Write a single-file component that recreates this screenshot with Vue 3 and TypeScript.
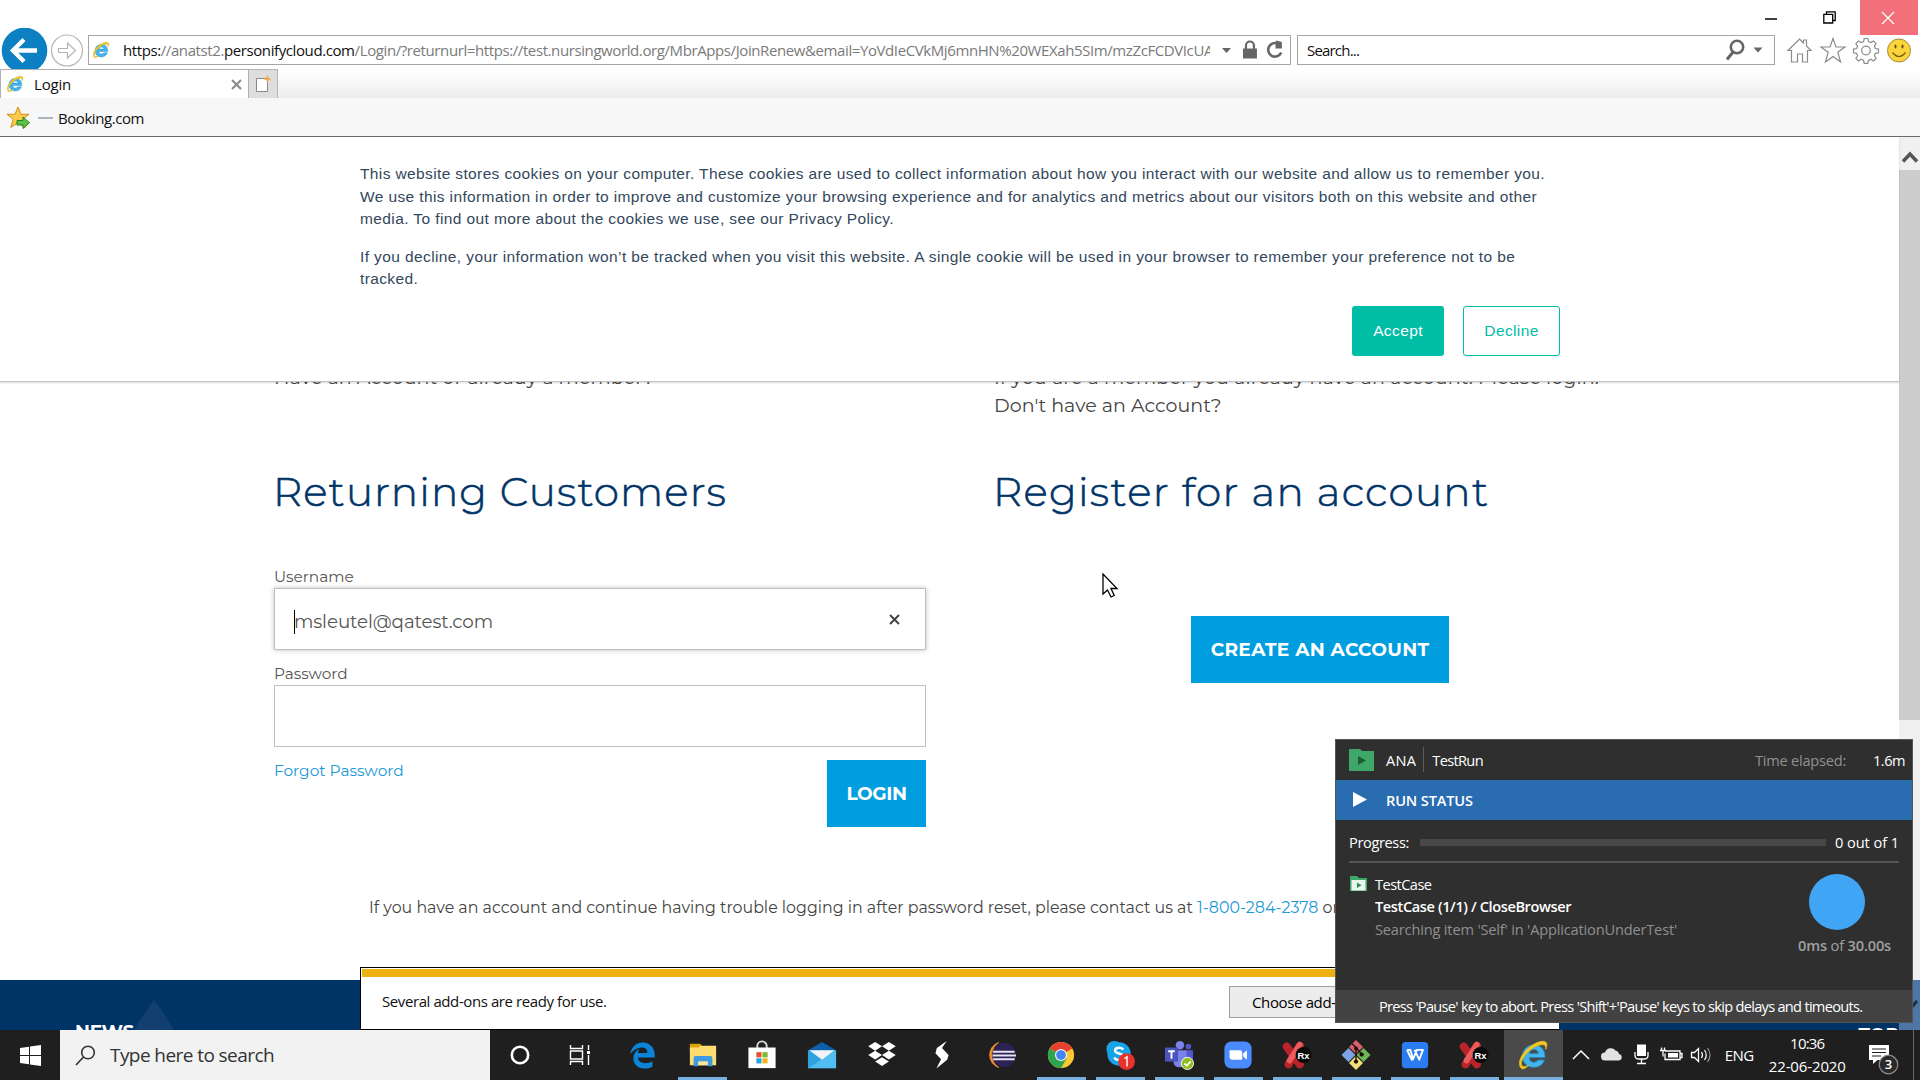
<script setup lang="ts">
interface TaskItem {
  id: string
  running?: boolean
  active?: boolean
}

const launchers: TaskItem[] = [
  { id: 'edge' },
  { id: 'explorer', running: true },
  { id: 'store' },
  { id: 'mail' },
  { id: 'dropbox' },
  { id: 'bolt' },
  { id: 'eclipse' },
]
const apps: TaskItem[] = [
  { id: 'chrome', running: true },
  { id: 'skype', running: true },
  { id: 'teams', running: true },
  { id: 'zoom', running: true },
  { id: 'ranorex', running: true },
  { id: 'git', running: true },
  { id: 'wps', running: true },
  { id: 'ranorex', running: true },
  { id: 'ie', running: true, active: true },
]
</script>

<template>
  <div class="screen">
    <svg class="defs" width="0" height="0" aria-hidden="true">
      <symbol id="i-ielogo" viewBox="0 0 32 32">
        <path d="M28 18.500H12.200c.2 3 1.900 4.700 4.600 4.700 1.900 0 3.200-.7 4-2.200h6.600c-1.500 4.700-5.300 7.300-10.600 7.300C10 28.300 5.500 24 5.500 17.300 5.500 10.500 10.100 6 16.800 6 23.900 6 28 10.600 28 17.800zM21.400 14.400c-.3-2.500-2-3.900-4.500-3.900s-4.200 1.400-4.600 3.900z" fill="#43b5ea" stroke="#1d86c8" stroke-width=".8" />
        <path d="M4.500 29.500C-.5 25 4 15 12 8.500 19.500 2.300 28 .8 29.500 4c.8 1.600.4 3.800-.8 6.200.3-2.300-.2-3.800-1.900-4.300C22.500 4.600 15 8.500 9.500 14.700c-4.600 5.200-6.500 10.500-4.300 12.300 1.300 1 3.700.6 6.300-.6-2.700 2.600-5.300 4.300-7 3.100z" fill="#f2cb2d" stroke="#d9b01f" stroke-width=".9" />
      </symbol>
      <symbol id="i-edge" viewBox="0 0 512 512">
        <path fill="#0a84d8" d="M25.714 228.163c.111-.162.23-.323.342-.485-.021.162-.045.323-.065.485h-.277zm460.572 15.508c0-44.032-7.754-84.465-28.801-122.405C416.498 47.879 343.912 8.001 258.893 8.001 118.962 7.724 40.617 113.214 26.056 227.679c42.429-61.312 117.073-121.376 220.375-124.966 0 0 109.666 0 99.419 104.957H169.997c6.369-37.386 18.554-58.986 34.339-78.926-75.048 34.893-121.85 96.096-120.742 188.315.83 71.448 50.124 144.836 120.743 171.976 83.357 31.847 192.776 7.2 240.132-21.324V363.307c-80.864 56.494-270.871 60.925-272.255-67.572h314.073v-52.064z" />
      </symbol>
      <symbol id="i-explorer" viewBox="0 0 32 32">
        <path d="M2 4h11l2 2.500v5H2z" fill="#d9a300" />
        <path d="M2 8h9l2.500-2H30v21H2z" fill="#fddc70" />
        <path d="M6 28V19q0-2 2-2h16q2 0 2 2v9h-5v-5H11v5z" fill="#3d9be3" />
        <path d="M11 23h10v4H11z" fill="#fbe7a0" />
      </symbol>
      <symbol id="i-store" viewBox="0 0 32 32">
        <path d="M11 9V6.500a5 5 0 0 1 10 0V9" fill="none" stroke="#d8d8d8" stroke-width="2" />
        <path d="M1.500 8h29v22h-29z" fill="#fff" />
        <path d="M10 13h5.500v5.500H10z" fill="#e8512a" /><path d="M16.500 13H22v5.500h-5.500z" fill="#7cb82f" />
        <path d="M10 19.500h5.500V25H10z" fill="#2aa3e3" /><path d="M16.500 19.500H22V25h-5.500z" fill="#f6b51e" />
      </symbol>
      <symbol id="i-mail" viewBox="0 0 32 32">
        <path d="M1 11 16 2l15 9-15 6z" fill="#0f5fa8" />
        <path d="M1 11h30v19H1z" fill="#2ea3e0" />
        <path d="M1 30l30-19v19z" fill="#52bdf0" />
        <path d="M2.500 11h27L16 21z" fill="#f0f4f8" />
      </symbol>
      <symbol id="i-dropbox" viewBox="0 0 32 32">
        <path fill="#fff" d="M8.700 2l7.300 4.700-7.300 4.700L1.300 6.700zM23.300 2l7.400 4.700-7.400 4.700L16 6.700zM1.300 16.100l7.400-4.700 7.300 4.700-7.300 4.700zM23.300 11.400l7.400 4.700-7.400 4.700-7.300-4.700zM8.700 23l7.300-4.700 7.300 4.700-7.300 4.800z" />
      </symbol>
      <symbol id="i-bolt" viewBox="0 0 32 32">
        <path fill="#fff" d="M21 1 10.500 8.500 9 14l6 6.500-5 10 11.500-9.500 1.500-5-7-7.500z" />
      </symbol>
      <symbol id="i-eclipse" viewBox="0 0 32 32">
        <circle cx="18" cy="16" r="13" fill="#2c2255" />
        <path d="M12.500 2.700A14 14 0 0 0 12.500 29.300 15.500 15.500 0 0 1 12.500 2.700z" fill="#f0912e" stroke="#f0912e" stroke-width="1" />
        <path d="M6.500 11.500h23v2h-23zM6 15.500h25v2.200H6zM6.500 19.500h23v2h-23z" fill="#e4e4f2" />
      </symbol>
      <symbol id="i-chrome" viewBox="0 0 32 32">
        <circle cx="16" cy="16" r="14" fill="#fbc832" />
        <path d="M16 16 3.900 9A14 14 0 0 1 28.100 9z" fill="#e4412f" />
        <path d="M3.900 9A14 14 0 0 0 16 30l6.060-10.500L16 16z" fill="#2da44e" />
        <circle cx="16" cy="16" r="6.500" fill="#f1f1f1" /><circle cx="16" cy="16" r="5.200" fill="#4285f4" />
      </symbol>
      <symbol id="i-skype" viewBox="0 0 32 32">
        <circle cx="10" cy="9.500" r="8.500" fill="#1ca3e6" /><circle cx="15" cy="15" r="12.500" fill="#14a4e8" />
        <path d="M19.500 10.300c-1-1.600-2.400-2.100-4.500-2.100-2.600 0-4.300 1.100-4.300 3 0 4.300 8.800 2.200 8.800 6.700 0 2.200-1.900 3.500-4.500 3.500-2.200 0-4-.8-5-2.800" fill="none" stroke="#fff" stroke-width="2.600" />
        <circle cx="23" cy="23" r="9" fill="#e8322d" />
        <path d="M20.800 19.800l2.700-1.800v10.300" fill="none" stroke="#fff" stroke-width="1.500" />
      </symbol>
      <symbol id="i-teams" viewBox="0 0 32 32">
        <circle cx="17" cy="5.500" r="4.500" fill="#7b83eb" /><circle cx="26" cy="7" r="3" fill="#5059c9" />
        <path d="M22 11h9v9q0 5-5 5h-4z" fill="#5059c9" /><path d="M10 11h14v11q0 7-7 7t-7-7z" fill="#7b83eb" />
        <path d="M1 8h14v15H1z" fill="#4b53bc" /><path d="M4.500 12h7M8 12v8" stroke="#fff" stroke-width="2" />
        <circle cx="25" cy="25" r="6.500" fill="#8fbe1c" stroke="#fff" stroke-width="1" /><path d="M21.800 25l2.500 2.500 4.200-4.700" fill="none" stroke="#fff" stroke-width="1.800" />
      </symbol>
      <symbol id="i-zoom" viewBox="0 0 32 32">
        <rect x="1.500" y="1.500" width="29" height="29" rx="7.500" fill="#4a8cff" />
        <path d="M7 11h11q2.500 0 2.500 2.500V21h-11Q7 21 7 18.500zM21.500 14.500l4-3.500v10l-4-3.500z" fill="#fff" />
      </symbol>
      <symbol id="i-ranorex" viewBox="0 0 32 32">
        <path d="M5 7l14 19M19 6 7 26" stroke="#b9242a" stroke-width="8.500" stroke-linecap="round" />
        <path d="M19 5 8 22" stroke="#ec5c5c" stroke-width="6" stroke-linecap="round" />
        <circle cx="23" cy="16" r="8.500" fill="#0a0a0a" />
        <text x="16.500" y="20" font-family="Liberation Sans, sans-serif" font-weight="700" font-size="10" fill="#fff">Rx</text>
      </symbol>
      <symbol id="i-git" viewBox="0 0 32 32">
        <path d="M16 0l7.500 7.500-7.500 7.500-7.500-7.500z" fill="#d8626a" /><path d="M8 8.500 15.300 16 8 23.500.5 16z" fill="#7ea2e6" />
        <path d="M24 8.500l7.500 7.500-7.500 7.500-7.300-7.500z" fill="#6db558" /><path d="M16 17l7.500 7.500L16 32l-7.500-7.500z" fill="#f4e07a" />
        <path d="M12 4l10 11M16 10v14" stroke="#2b1512" stroke-width="1.600" /><circle cx="16" cy="23" r="2.300" fill="#1c120c" /><circle cx="22" cy="15.500" r="2.300" fill="#1c120c" /><circle cx="16" cy="9" r="2" fill="#1c120c" />
      </symbol>
      <symbol id="i-wps" viewBox="0 0 32 32">
        <rect x="2" y="2" width="28" height="28" rx="4" fill="#2b7cf0" />
        <path d="M7.500 10.500h3.500l3 10 4-10h6.500l-4 10.500-5-10.500M7.500 10.500 12.500 21l2-.5" fill="none" stroke="#fff" stroke-width="2" stroke-linejoin="round" />
      </symbol>
      <symbol id="i-ie" viewBox="0 0 32 32"><use href="#i-ielogo" /></symbol>
    </svg>

    <header class="chrome">
      <div class="titlebar">
        <span class="winbtn"><svg width="12" height="12"><path d="M0 7h12" stroke="#000" stroke-width="1.500" /></svg></span>
        <span class="winbtn"><svg width="13" height="13"><path d="M3.500 3V.8h8.700v8.700H10M.8 3.300h8.900V12H.8z" fill="none" stroke="#000" stroke-width="1.300" /></svg></span>
        <span class="winbtn close"><svg width="14" height="14"><path d="M1 1l12 12M13 1 1 13" stroke="#fff" stroke-width="1.300" /></svg></span>
      </div>
      <div class="navrow">
        <svg class="navs" width="88" height="42" viewBox="0 0 88 42">
          <circle cx="24.500" cy="22.500" r="22.800" fill="#0c80c3" />
          <path d="M13 22.500h24M24 11.500 13 22.500l11 11" fill="none" stroke="#fff" stroke-width="4.400" />
          <circle cx="67" cy="22.500" r="15.500" fill="#fff" stroke="#b5b5b5" stroke-width="1.200" />
          <path d="M58.500 20.500h9v-5.500l8 7.500-8 7.500v-5.500h-9z" fill="none" stroke="#b5b5b5" stroke-width="1.200" />
        </svg>
        <div class="address">
          <svg class="fav" width="18" height="18"><use href="#i-ielogo" /></svg>
          <div class="urlclip"><span class="t url"><b>https:</b>//anatst2.<b>personifycloud.com</b>/Login/?returnurl=https://test.nursingworld.org/MbrApps/JoinRenew&amp;email=YoVdIeCVkMj6mnHN%20WEXah5SIm/mzZcFCDVIcUA</span></div>
          <svg class="tools" width="68" height="28" viewBox="0 0 68 28">
            <path d="M0 12h9l-4.500 5z" fill="#666" />
            <path d="M21 12.500h14v10H21z" fill="#666" /><path d="M24 13V9.500a4 4 0 0 1 8 0V13" fill="none" stroke="#666" stroke-width="2.200" />
            <path d="M58.300 9.500A6.800 6.800 0 1 0 59.300 16.500" fill="none" stroke="#666" stroke-width="2.600" /><path d="M54 4.500 60 6v6.500h-6.500z" fill="#666" />
          </svg>
        </div>
        <div class="search">
          <span class="t ph">Search...</span>
          <svg width="38" height="22" viewBox="0 0 38 22"><circle cx="11" cy="8" r="6.200" fill="none" stroke="#666" stroke-width="2.600" /><path d="M7.500 12.500 1 20.500" stroke="#666" stroke-width="3" /><path d="M27.500 8.500h9l-4.500 5z" fill="#666" /></svg>
        </div>
        <svg class="cmd" width="134" height="30" viewBox="0 0 134 30">
          <g fill="#fff" stroke="#8b8b8b" stroke-width="1.200">
            <path d="M3 15.500 14.500 4l4 4V5h3v6l4.500 4.500h-3.500V27h-5v-8h-5v8H6.500V15.500z" />
            <path d="M48 3.500l3 8.500h9l-7.200 5.300L55.600 27 48 21.400 40.400 27l2.800-9.700L36 12h9z" />
            <path d="M79.200 3.500h3.600l.6 3 2.500 1.100 2.600-1.700 2.600 2.600-1.700 2.600 1 2.400 3.100.6v3.700l-3.100.6-1 2.400 1.700 2.600-2.600 2.600-2.600-1.700-2.500 1.100-.6 3h-3.600l-.6-3-2.500-1.100-2.600 1.700-2.600-2.600 1.700-2.600-1-2.400-3.100-.6v-3.700l3.100-.6 1-2.400-1.700-2.600 2.600-2.600 2.600 1.700 2.500-1.100z" /><circle cx="81" cy="15.500" r="4.300" />
          </g>
          <circle cx="114" cy="15.500" r="11.500" fill="#fbd33b" stroke="#a08c3c" stroke-width="1" />
          <path d="M107.500 17.500q6.500 8 13 0" fill="none" stroke="#6d5a14" stroke-width="1.200" /><ellipse cx="110.500" cy="11.500" rx="1" ry="2" fill="#5f4e10" /><ellipse cx="117.500" cy="11.500" rx="1" ry="2" fill="#5f4e10" />
        </svg>
      </div>
      <div class="tabs">
        <div class="tab">
          <svg width="18" height="18"><use href="#i-ielogo" /></svg>
          <span class="t title">Login</span>
          <svg class="tabx" width="11" height="11"><path d="M1 1l9 9M10 1 1 10" stroke="#8a8a8a" stroke-width="2" /></svg>
        </div>
        <div class="newtab"><svg width="18" height="18" viewBox="0 0 18 18"><path d="M2.500 3.500h11v13h-11z" fill="#fff" stroke="#888" stroke-width="1" /><path d="M13.500 0l1.200 2.800L17.500 4l-2.800 1.200L13.500 8l-1.200-2.800L9.500 4l2.800-1.200z" fill="#f4a948" /></svg></div>
      </div>
      <div class="favbar">
        <svg width="26" height="26" viewBox="0 0 26 26"><path d="M12 2l3 7.300h8l-6.200 5 2.400 8.200L12 17.700 4.800 22.500l2.400-8.200L1 9.300h8z" fill="#fcc94a" stroke="#d28f1c" stroke-width="1" /><path d="M11 15.500h6V12l6.500 5.700L17 23.500V20h-6z" fill="#5cc341" stroke="#2c8420" stroke-width="1" /></svg>
        <i class="dash"></i>
        <span class="t bm">Booking.com</span>
      </div>
    </header>

    <main class="viewport">
      <div class="page">
        <div class="cols">
          <section>
            <p class="intro"><span class="t have">Have an Account or already a member?</span></p>
            <h2 class="returning">Returning Customers</h2>
            <div class="label first">Username</div>
            <div class="input focus"><i class="caret"></i><span class="t value">msleutel@qatest.com</span><svg width="11" height="11"><path d="M1 1l9 9M10 1 1 10" stroke="#444" stroke-width="2" /></svg></div>
            <div class="label">Password</div>
            <div class="input"></div>
            <div class="actions"><a>Forgot Password</a><button class="btn login">LOGIN</button></div>
          </section>
          <section>
            <p class="intro"><span class="t long">If you are a member you already have an account. Please login.</span><br /><span class="t none">Don't have an Account?</span></p>
            <h2 class="register">Register for an account</h2>
            <button class="btn create">CREATE AN ACCOUNT</button>
          </section>
        </div>
        <p class="help">If you have an account and continue having trouble logging in after password reset, please contact us at <a>1-800-284-2378</a> or</p>
        <footer class="foot"><b class="news">NEWS</b><svg width="40" height="30"><path d="M20 0q12 16 20 30H0Q8 16 20 0z" fill="#133f70" /></svg><b class="top">TOP</b></footer>
      </div>
      <aside class="scroll">
        <div class="up"><svg width="18" height="14"><path d="M2 11.500 9 4l7 7.500" fill="none" stroke="#555" stroke-width="3.500" /></svg></div>
        <div class="thumb"></div>
        <div class="rest"></div>
        <div class="down"><svg width="21" height="14"><path d="M4 3l7 8 7-8" fill="none" stroke="#1c2b40" stroke-width="3" /></svg></div>
      </aside>
    </main>

    <nav class="taskbar">
      <div class="start"><svg width="21" height="21" viewBox="0 0 21 21"><path d="M0 3l9-1.300V10H0zM10 1.500 21 0v10H10zM0 11h9v8.200L0 18zM10 11h11v10l-11-1.500z" fill="#fff" /></svg></div>
      <div class="tsearch"><svg width="21" height="21" viewBox="0 0 21 21"><circle cx="13" cy="7.500" r="6.300" fill="none" stroke="#333" stroke-width="1.600" /><path d="M8.500 12 1 20" stroke="#333" stroke-width="1.700" /></svg><span class="t">Type here to search</span></div>
      <div class="slot"><svg width="20" height="20"><circle cx="10" cy="10" r="8.200" fill="none" stroke="#fff" stroke-width="2.600" /></svg></div>
      <div class="slot view"><svg width="22" height="20" viewBox="0 0 22 20"><path d="M1.500 0v3.500h12V0M1.500 6h12v8h-12zM1.500 20v-3.500h12V20M19.500 0v5M19.500 10v10" fill="none" stroke="#fff" stroke-width="1.400" /><path d="M18 6h3v3h-3z" fill="#fff" /></svg></div>
      <div v-for="(item, i) in launchers" :key="'l' + i" class="slot" :class="{ running: item.running }"><svg :class="item.id" width="30" height="30"><use :href="'#i-' + item.id" /></svg></div>
      <div v-for="(item, i) in apps" :key="'a' + i" class="slot app" :class="{ running: item.running, active: item.active }"><svg :class="item.id" width="30" height="30"><use :href="'#i-' + item.id" /></svg></div>
      <div class="tray">
        <svg width="144" height="24" viewBox="0 0 144 24">
          <path d="M2 16l8-8 8 8" fill="none" stroke="#fff" stroke-width="1.500" />
          <path d="M34 17.500a4 4 0 0 1 0-8 6 6 0 0 1 10.500-2q3 .5 3.500 3.500a3.300 3.300 0 0 1 0 6.500z" fill="#e2e2e2" />
          <path d="M66 1.500h9V13h-9z" fill="#fff" /><path d="M64 9v3.500q0 3.500 4 3.500h5q4 0 4-3.500V9M70.500 16v4M66 20.500h9" fill="none" stroke="#fff" stroke-width="1.300" />
          <path d="M94 8h15v8.500H94v-6M109.500 10.500h1.500v4h-1.500M90.500 4.500v3M93.500 4.500v3M89 7.500h6M92 7.500v6" fill="none" stroke="#fff" stroke-width="1.300" /><path d="M97 10h10v4.500H97z" fill="#fff" />
          <path d="M120.500 9.500h3l4-4v13l-4-4h-3z" fill="none" stroke="#fff" stroke-width="1.300" /><path d="M130.500 9q2 3 0 6M133.500 7q3.500 5 0 10" fill="none" stroke="#fff" stroke-width="1.200" /><path d="M136.500 5q5 7 0 14" fill="none" stroke="#999" stroke-width="1.100" />
        </svg>
        <span class="eng">ENG</span>
        <div class="clock"><span class="t time">10:36</span><span class="t">22-06-2020</span></div>
        <svg class="notif" width="32" height="34" viewBox="0 0 32 34"><path d="M1 2h20v15H9.500L5 21v-4H1z" fill="#fff" /><path d="M4 6h14M4 9.500h14M4 13h9" stroke="#1f1f1f" stroke-width="1.200" /><circle cx="20.500" cy="21.500" r="9.300" fill="#2a2a2a" stroke="#8b8b8b" stroke-width="1.300" /><text x="16.800" y="26.200" font-family="Open Sans, sans-serif" font-size="13" font-weight="600" fill="#fff">3</text></svg>
        <i class="peek"></i>
      </div>
    </nav>

    <div class="cookies">
      <div class="ctext">
        <p><span class="t c1">This website stores cookies on your computer. These cookies are used to collect information about how you interact with our website and allow us to remember you.</span><span class="t">We use this information in order to improve and customize your browsing experience and for analytics and metrics about our visitors both on this website and other</span><span class="t c3">media. To find out more about the cookies we use, see our Privacy Policy.</span></p>
        <p><span class="t c3">If you decline, your information won’t be tracked when you visit this website. A single cookie will be used in your browser to remember your preference not to be</span><span class="t">tracked.</span></p>
      </div>
      <div class="cbtns"><button class="accept">Accept</button><button class="decline">Decline</button></div>
    </div>

    <div class="addons">
      <div class="gold"></div>
      <div class="arow"><span class="t msg">Several add-ons are ready for use.</span><button>Choose add-ons</button></div>
    </div>

    <div class="runner">
      <div class="rhead">
        <svg width="26" height="24" viewBox="0 0 26 24"><path d="M0 1h11l2 2h12v20H0z" fill="#3fa868" /><path d="M9 8l8 4.500L9 17z" fill="#1d5c38" /></svg>
        <span class="t ana">ANA</span><i></i><span class="t run">TestRun</span>
        <span class="t el">Time elapsed:</span><span class="t tm">1.6m</span>
      </div>
      <div class="rstat"><svg width="14" height="15"><path d="M0 0l14 7.500L0 15z" fill="#fff" /></svg><span class="t">RUN STATUS</span></div>
      <div class="rbody">
        <div class="rprog"><span class="t prog">Progress:</span><i></i><span class="t count">0 out of 1</span></div>
        <div class="rcase">
          <svg width="18" height="16" viewBox="0 0 18 16"><path d="M0 0h7l2 2h8v13H0z" fill="#3fa868" /><path d="M1.500 4h14v10.500h-14z" fill="#e8f7ee" /><path d="M7 6.500 11.500 9.300 7 12z" fill="#2e8a52" /></svg>
          <div class="rlines"><span class="t case">TestCase</span><span class="t bold">TestCase (1/1) / CloseBrowser</span><span class="t dim">Searching item 'Self' in 'ApplicationUnderTest'</span></div>
          <div class="rtime"><i></i><span class="t"><b>0ms</b> of <b>30.00s</b></span></div>
        </div>
      </div>
      <div class="rfoot"><span class="t">Press 'Pause' key to abort. Press 'Shift'+'Pause' keys to skip delays and timeouts.</span></div>
    </div>

    <svg class="cursor" width="17" height="26" viewBox="0 0 17 26"><path d="M1 1v20l4.500-4 3.500 7 3.200-1.500L9 15.500h6z" fill="#fff" stroke="#000" stroke-width="1.300" /></svg>
  </div>
</template>

<style>
body { margin: 0; overflow: hidden; }
</style>

<style scoped>
.screen { position: relative; width: 1920px; height: 1080px; overflow: hidden; background: #fff; display: flex; flex-direction: column; font-family: "Open Sans", "Noto Sans", sans-serif; font-size: 15px; color: #111; }
.defs { position: absolute; }
.t { display: inline-block; white-space: nowrap; }
button { border: 0; margin: 0; padding: 0; font: inherit; letter-spacing: inherit; box-sizing: border-box; white-space: nowrap; }
p, h2 { margin: 0; }

.chrome { height: 137px; box-sizing: border-box; border-bottom: 1.500px solid #6a6a6a; flex: none; display: flex; flex-direction: column; }
.titlebar { height: 28px; display: flex; justify-content: flex-end; padding-right: 2px; }
.winbtn { width: 58px; height: 35px; display: flex; align-items: center; justify-content: center; }
.winbtn:not(.close) { padding-right: 3px; width: 55.500px; }
.close { background: #f1707a; position: relative; z-index: 1; padding-right: 2px; width: 56px; }
.navrow { height: 41px; display: flex; align-items: flex-start; }
.navs { flex: none; overflow: hidden; }
.address { margin-top: 7px; width: 1203px; height: 30px; box-sizing: border-box; border: 1px solid #a5a5a5; display: flex; align-items: center; background: #fff; }
.fav { margin-left: 3px; }
.urlclip { margin-left: 13px; width: 1089px; overflow: hidden; color: #7a7a7a; line-height: 26px; }
.url { letter-spacing: -.401px; }
.url b { font-weight: 400; color: #111; }
.tools { margin-left: 12px; }
.search { margin: 7px 0 0 6px; width: 478px; height: 30px; box-sizing: border-box; border: 1px solid #a5a5a5; display: flex; align-items: center; justify-content: space-between; padding: 0 10px 0 9px; background: #fff; }
.ph { letter-spacing: -.81px; }
.cmd { margin: 7px 0 0 10px; }
.tabs { height: 29px; display: flex; background: linear-gradient(#fff, #fafafa 35%, #ececec); }
.tab { width: 249px; box-sizing: border-box; border: 1px solid #b0b0b0; border-bottom: 0; background: #fff; display: flex; align-items: center; padding-left: 5px; }
.title { margin-left: 10px; letter-spacing: -.2px; }
.tabx { margin-left: auto; margin-right: 6px; }
.newtab { width: 29px; box-sizing: border-box; border: 1px solid #b5b5b5; border-bottom: 0; border-left: 0; background: #dedede; display: flex; align-items: center; justify-content: center; }
.favbar { flex: 1; background: #f7f7f7; display: flex; align-items: center; padding: 1px 0 0 6px; }
.bm { letter-spacing: -.436px; }
.dash { width: 15px; height: 2px; background: #a9b4bd; margin: 0 5px 0 6px; }

.viewport { height: 893px; flex: none; display: flex; }
.page { width: 1899px; height: 893px; box-sizing: border-box; padding-top: 227px; font-family: Montserrat, "Inter", sans-serif; }
.cols { display: grid; grid-template-columns: 652px 652px; column-gap: 68px; margin-left: 274px; }
.intro { height: 56px; font-size: 19px; line-height: 28px; color: #444; }
.have { letter-spacing: .1px; }
.long { letter-spacing: .15px; }
.none { letter-spacing: .04px; }
h2 { margin: 48px 0 0 -1px; padding-bottom: 1px; font-size: 40.500px; line-height: 48px; font-weight: 300; -webkit-text-stroke: .6px #003468; color: #003468; white-space: nowrap; }
.returning { letter-spacing: 1.140px; }
.register { letter-spacing: 1.330px; }
.label { font-size: 15.300px; line-height: 20px; color: #555; margin: 14px 0 1px; }
.label.first { margin-top: 50px; }
.input { height: 62px; box-sizing: border-box; border: 1.500px solid #bfbfbf; display: flex; align-items: center; padding: 0 25px 0 19px; font-size: 18.300px; color: #555; }
.input.focus { box-shadow: 0 0 5px rgba(0, 0, 0, .25); padding-top: 5px; }
.input svg { margin: -5px 0 0 auto; }
.value { letter-spacing: -.1px; }
.caret { width: 1px; height: 24px; background: #000; margin: 0 -1px 0 0; }
.actions { display: flex; justify-content: space-between; margin-top: 13px; }
.actions a { font-size: 15.400px; line-height: 22px; }
a { color: #1b98d5; }
.btn { background: #009ddf; color: #fff; font-weight: 700; font-size: 18.600px; height: 67px; display: flex; align-items: center; justify-content: center; }
.login { width: 99px; letter-spacing: -.4px; }
.create { width: 258px; margin: 99px auto 0; letter-spacing: .3px; }
.help { margin: 70px 0 63px 369px; font-size: 15.850px; line-height: 21px; height: 20px; color: #444; white-space: nowrap; }
.foot { height: 50px; background: #003366; color: #fff; display: flex; font-size: 18.500px; overflow: hidden; }
.news { margin: 40px 0 0 75px; width: 59px; line-height: 24px; letter-spacing: -.3px; }
.foot svg { margin: 20px 0 0 0; }
.top { margin: 43px 0 0 auto; line-height: 24px; }
.scroll { width: 21px; background: #f0f0f0; display: flex; flex-direction: column; }
.up { height: 33px; padding-top: 6px; box-sizing: border-box; display: flex; align-items: center; justify-content: center; }
.thumb { height: 550px; background: #cdcdcd; }
.rest { height: 260px; }
.down { height: 50px; background: #4d75a5; display: flex; align-items: center; }

.taskbar { height: 50px; background: #1f1f1f; display: flex; color: #fff; }
.start { width: 60px; display: flex; align-items: center; justify-content: center; }
.tsearch { width: 430px; background: #f2f2f2; color: #333; display: flex; align-items: center; font-size: 19px; line-height: 24px; letter-spacing: -.571px; box-sizing: border-box; padding-left: 15px; }
.tsearch .t { margin-left: 14px; }
.slot { width: 59.860px; height: 50px; display: flex; align-items: center; justify-content: center; position: relative; }
.view { margin-right: 3px; }
.app { width: 59px; }
.running::after { content: ""; position: absolute; left: 5px; right: 5px; bottom: 0; height: 3px; background: #76b0e0; }
.active { background: #4a4a4a; }
.active::after { left: 0; right: 0; }
.slot .edge { width: 27px; height: 27px; }
.slot .ie { width: 34px; height: 32px; }
.tray { flex: 1; display: flex; align-items: center; }
.tray > svg:first-child { margin-left: 8px; }
.eng { margin-left: 10px; width: 30px; letter-spacing: -.5px; }
.clock { margin-left: 11px; width: 83px; display: flex; flex-direction: column; align-items: center; line-height: 23px; height: 46px; letter-spacing: -.13px; }
.time { letter-spacing: -.8px; }
.notif { margin: 9px 0 0 19px; }
.peek { width: 1px; height: 50px; background: #666; margin-left: 13px; }

.cookies { position: absolute; left: 0; top: 137px; width: 1899px; height: 244.500px; box-sizing: border-box; background: #fff; border-bottom: 1.500px solid #c4c4c4; box-shadow: 0 1px 2px rgba(0, 0, 0, .15); font-family: "Liberation Sans", Arial, sans-serif; font-size: 15.500px; line-height: 22.500px; letter-spacing: .38px; color: #33475b; display: flex; flex-direction: column; }
.c1 { letter-spacing: .373px; }
.c3 { letter-spacing: .395px; }
.ctext { margin: 26px 0 0 360px; height: 143px; }
.ctext p { display: flex; flex-direction: column; align-items: flex-start; margin-bottom: 15px; }
.cbtns { display: flex; gap: 19px; margin-left: 1352px; }
.cbtns button { height: 50px; border-radius: 3px; display: flex; align-items: center; justify-content: center; }
.accept { width: 92px; background: #00bda5; color: #fff; }
.decline { width: 97px; background: #fff; color: #00bda5; }
.cookies .decline { border: 1.500px solid #00bda5; }

.addons { position: absolute; left: 360px; top: 967px; width: 1199px; height: 63px; box-sizing: border-box; border: 1px solid #000; border-right: 0; background: #fff; }
.gold { height: 8px; margin: 1px 0 0 1px; background: #ecb010; }
.arow { display: flex; align-items: flex-start; padding-left: 21px; line-height: 31px; margin-top: 9px; }
.msg { width: 225px; letter-spacing: -.41px; }
.arow button { margin-left: 622px; width: 154px; height: 32px; border: 1px solid #a0a0a0; background: #ececec; display: flex; align-items: center; justify-content: center; letter-spacing: -.36px; }

.runner { position: absolute; left: 1335px; top: 739px; width: 578px; height: 284px; box-sizing: border-box; border: 1px solid #555; background: #2f2f2f; color: #fff; display: flex; flex-direction: column; line-height: 20px; font-size: 14.600px; }
.rhead { height: 40px; display: flex; align-items: center; padding: 0 7px 0 13px; }
.ana { margin-left: 11px; letter-spacing: .3px; }
.rhead i { width: 1px; height: 25px; background: #5c5c5c; margin: 0 8px 0 7px; }
.run { letter-spacing: -.68px; }
.el { margin-left: auto; color: #8f8f8f; letter-spacing: -.24px; }
.tm { margin-left: 27px; letter-spacing: -.51px; }
.rstat { height: 40px; background: #2a6cb0; display: flex; align-items: center; padding-left: 17px; font-weight: 600; letter-spacing: -.15px; }
.rstat .t { margin-left: 19px; }
.rbody { height: 171px; padding: 0 13px; }
.rprog { height: 43px; padding-top: 4px; box-sizing: border-box; border-bottom: 2px solid #555; display: flex; align-items: center; }
.rprog i { height: 7px; flex: 1; background: #484848; margin: 0 9px 0 11px; }
.prog { letter-spacing: -.38px; }
.count { letter-spacing: -.07px; }
.rcase { display: flex; padding-top: 10px; }
.rcase > svg { margin: 3px 0 0 1px; }
.rlines { margin-left: 7px; display: flex; flex-direction: column; align-items: flex-start; line-height: 22.700px; }
.case { letter-spacing: -.55px; }
.bold { font-weight: 600; letter-spacing: -.4px; }
.dim { color: #8f8f8f; letter-spacing: -.17px; }
.rtime { margin-left: auto; padding: 1px 8px 0 0; display: flex; flex-direction: column; align-items: center; color: #a0a0a0; letter-spacing: -.17px; }
.rtime i { width: 56px; height: 56px; border-radius: 50%; background: #40a5f5; margin: 0 16px 5px 0; }
.rtime b { font-weight: 600; }
.rfoot { flex: 1; background: #424242; line-height: 32px; padding-left: 43px; letter-spacing: -.71px; }
.cursor { position: absolute; left: 1102px; top: 573px; }
</style>
